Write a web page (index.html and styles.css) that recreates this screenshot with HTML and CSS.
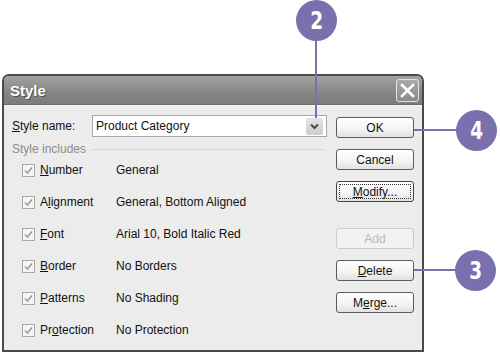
FILE: index.html
```html
<!DOCTYPE html>
<html>
<head>
<meta charset="utf-8">
<link rel="stylesheet" href="styles.css">
</head>
<body>
<div class="page">
  <div class="dialog">
    <div class="titlebar">
      <span class="title">Style</span>
      <span class="close">
        <svg width="15" height="15" viewBox="0 0 15 15"><path d="M2 2 L13 13 M13 2 L2 13" stroke="#fff" stroke-width="2.6" stroke-linecap="square"/></svg>
      </span>
    </div>
    <div class="body">
      <div class="main">
        <div class="name-row">
          <span class="name-label"><u>S</u>tyle name:</span>
          <div class="combo">
            <span>Product Category</span>
            <span class="drop">
              <svg width="9" height="7" viewBox="0 0 9 7"><path d="M1 1.5 L4.5 5 L8 1.5" fill="none" stroke="#4a4a4a" stroke-width="2"/></svg>
            </span>
          </div>
        </div>
        <div class="group-head"><span>Style includes</span><span class="rule"></span></div>
        <ul class="includes">
          <li class="row"><span class="check"><svg width="11" height="11" viewBox="0 0 11 11"><path d="M2 5.5 L4.5 8 L9 2.5" fill="none" stroke="#9c9c9c" stroke-width="1.6"/></svg></span><span class="item-label"><u>N</u>umber</span><span>General</span></li>
          <li class="row"><span class="check"><svg width="11" height="11" viewBox="0 0 11 11"><path d="M2 5.5 L4.5 8 L9 2.5" fill="none" stroke="#9c9c9c" stroke-width="1.6"/></svg></span><span class="item-label">A<u>l</u>ignment</span><span>General, Bottom Aligned</span></li>
          <li class="row"><span class="check"><svg width="11" height="11" viewBox="0 0 11 11"><path d="M2 5.5 L4.5 8 L9 2.5" fill="none" stroke="#9c9c9c" stroke-width="1.6"/></svg></span><span class="item-label"><u>F</u>ont</span><span>Arial 10, Bold Italic Red</span></li>
          <li class="row"><span class="check"><svg width="11" height="11" viewBox="0 0 11 11"><path d="M2 5.5 L4.5 8 L9 2.5" fill="none" stroke="#9c9c9c" stroke-width="1.6"/></svg></span><span class="item-label"><u>B</u>order</span><span>No Borders</span></li>
          <li class="row"><span class="check"><svg width="11" height="11" viewBox="0 0 11 11"><path d="M2 5.5 L4.5 8 L9 2.5" fill="none" stroke="#9c9c9c" stroke-width="1.6"/></svg></span><span class="item-label"><u>P</u>atterns</span><span>No Shading</span></li>
          <li class="row"><span class="check"><svg width="11" height="11" viewBox="0 0 11 11"><path d="M2 5.5 L4.5 8 L9 2.5" fill="none" stroke="#9c9c9c" stroke-width="1.6"/></svg></span><span class="item-label">Pr<u>o</u>tection</span><span>No Protection</span></li>
        </ul>
      </div>
      <div class="buttons">
        <span class="btn">OK</span>
        <span class="btn">Cancel</span>
        <span class="btn focus"><u>M</u>odify...</span>
        <span class="btn add">Add</span>
        <span class="btn"><u>D</u>elete</span>
        <span class="btn">M<u>e</u>rge...</span>
      </div>
    </div>
  </div>

  <span class="vline"></span>
  <span class="hline h4"></span>
  <span class="hline h3"></span>
  <span class="callout c2"><span class="num">2</span></span>
  <span class="callout c4"><span class="num">4</span></span>
  <span class="callout c3"><span class="num">3</span></span>
</div>
</body>
</html>
```
FILE: styles.css
```css
* { box-sizing: border-box; }

body {
  margin: 0;
  background: #fff;
  font-family: "Liberation Sans", Arial, sans-serif;
  font-size: 12px;
  color: #111;
}

.page {
  position: relative;
  width: 500px;
  height: 355px;
  overflow: hidden;
  padding-top: 74px;
  padding-left: 2px;
}

.dialog {
  width: 422px;
  height: 278px;
  border: 2px solid #4a4a4a;
  border-radius: 7px 7px 0 0;
  background: #ececec;
  display: flex;
  flex-direction: column;
}

.titlebar {
  height: 29px;
  flex: none;
  background: linear-gradient(#a2a2a2, #858585 60%, #7c7c7c);
  border-radius: 5px 5px 0 0;
  display: flex;
  align-items: center;
  justify-content: space-between;
  padding: 1px 3px 0 6px;
  border-bottom: 1px solid #6a6a6a;
}

.title {
  color: #fff;
  font-weight: bold;
  font-size: 15px;
  text-shadow: 1px 1px 0 #4f4f4f;
}

.close {
  width: 23px;
  height: 23px;
  border: 1px solid #e4e4e4;
  border-radius: 3px;
  background: linear-gradient(#a9a9a9, #8b8b8b);
  display: flex;
  align-items: center;
  justify-content: center;
}

.body {
  flex: 1;
  display: flex;
  border-top: 1px solid #f6f6f6;
}

.main {
  flex: 1;
  padding: 9px 0 0 8px;
}

.name-row {
  display: flex;
  align-items: center;
  height: 22px;
}

.name-label { width: 80px; }

.combo {
  flex: 1;
  height: 22px;
  border: 1px solid #a8a8a8;
  background: #fff;
  display: flex;
  align-items: center;
  justify-content: space-between;
  padding: 1px 3px 1px 3px;
}

.drop {
  width: 17px;
  height: 17px;
  border-radius: 2px;
  background: linear-gradient(#e4e4e4, #cdcdcd);
  display: flex;
  align-items: center;
  justify-content: center;
}

.group-head {
  display: flex;
  align-items: center;
  height: 14px;
  margin-top: 5px;
  color: #8c8c8c;
}

.rule {
  flex: 1;
  border-top: 1px solid #d6d6d6;
  margin: 1px 2px 0 5px;
}

.includes {
  list-style: none;
  margin: 0;
  padding: 6px 0 0 10px;
  display: grid;
  row-gap: 16px;
}

.row {
  display: flex;
  align-items: center;
  height: 16px;
}

.check {
  width: 13px;
  height: 13px;
  border: 1px solid #a6a6a6;
  background: #f4f4f4;
  margin-right: 5px;
  display: flex;
  align-items: center;
  justify-content: center;
}

.item-label { width: 76px; }

.buttons {
  width: 78px;
  margin: 0 8px 0 9px;
  padding-top: 11px;
  display: flex;
  flex-direction: column;
  gap: 11px;
}

.btn {
  height: 21px;
  border: 1px solid #5c5c5c;
  border-radius: 3px;
  background: linear-gradient(#ffffff, #f3f3f3 60%, #e2e2e2);
  display: flex;
  align-items: center;
  justify-content: center;
  color: #111;
}

.btn.focus {
  outline: 1px dotted #333;
  outline-offset: -4px;
  border-color: #444;
}

.btn.add {
  margin-top: 15px;
  color: #b8b8b8;
  border-color: #cbcbcb;
  background: #f2f2f2;
}

.callout {
  position: absolute;
  width: 41px;
  height: 41px;
  border-radius: 50%;
  background: #7a70ad;
  color: #fff;
  font-family: "DejaVu Sans", sans-serif;
  font-weight: bold;
  font-size: 25px;
  display: flex;
  align-items: center;
  justify-content: center;
}

.num {
  display: block;
  transform: scaleX(0.74);
  line-height: 1;
}

.c2 { left: 296px; top: 0; }
.c4 { left: 456px; top: 110px; }
.c3 { left: 455px; top: 250px; }

.vline {
  position: absolute;
  left: 315px;
  top: 38px;
  width: 2px;
  height: 80px;
  background: #7a70ad;
}

.hline {
  position: absolute;
  left: 414px;
  width: 44px;
  height: 2px;
  background: #7a70ad;
}

.h4 { top: 129px; }
.h3 { top: 269px; }
```
